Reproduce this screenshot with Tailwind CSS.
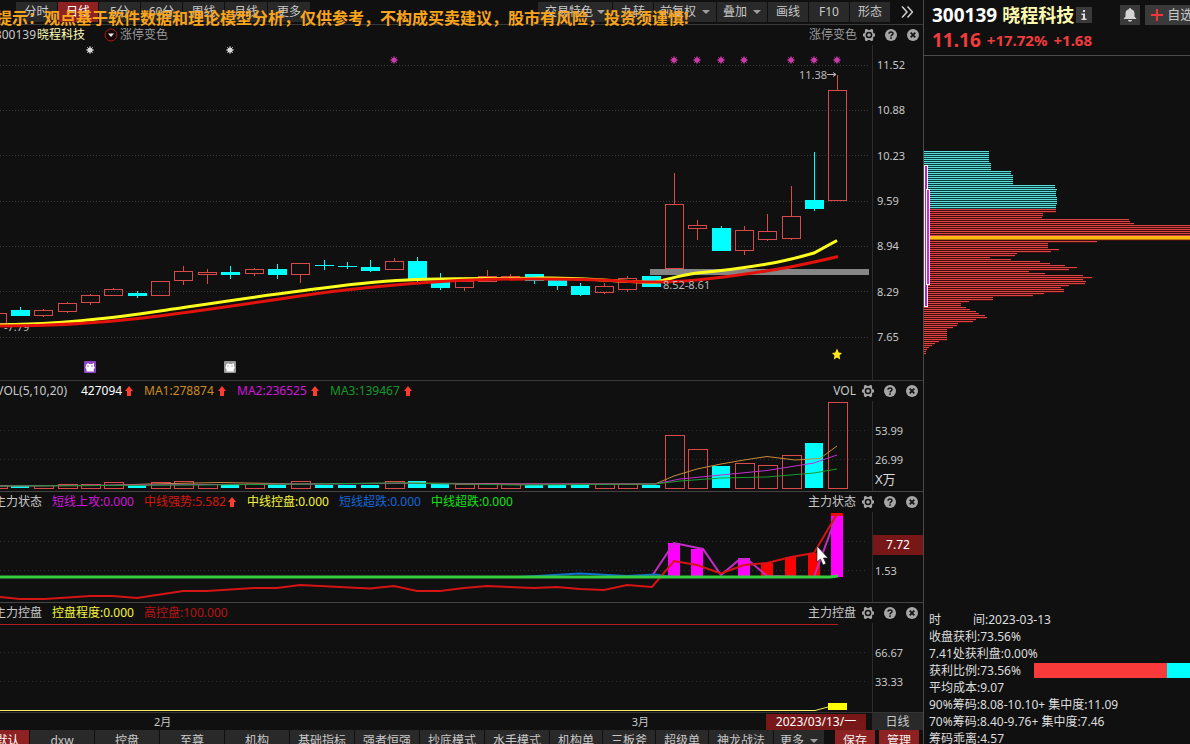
<!DOCTYPE html>
<html lang="zh-CN">
<head>
<meta charset="utf-8">
<title>300139 晓程科技</title>
<script src="https://cdn.jsdelivr.net/npm/@tailwindcss/browser@4"></script>
</head>
<body class="h-screen overflow-hidden bg-[#101010] font-['Noto_Sans','Noto_Sans_CJK_SC',sans-serif] text-xs text-[#c8c8c8]">

<svg class="hidden" aria-hidden="true">
  <symbol id="gear" viewBox="0 0 12 12">
    <path fill="#a6a6a6" fill-rule="evenodd" d="M2.6 0h1.6l.7 1h2.2l.7-1h1.6l.9 2-.4.9.9 1.6H12v3h-1.2l-.9 1.6.4.9-.9 2H7.8l-.7-1H4.900l-.7 1H2.600l-.9-2 .4-.9-.9-1.600H0v-3h1.200l.9-1.600-.4-.9zM6 2.700a3.300 3.300 0 1 0 0 6.600a3.300 3.300 0 0 0 0-6.600z"/>
    <circle cx="6" cy="6" r="1.800" fill="#a6a6a6"/>
  </symbol>
  <symbol id="help" viewBox="0 0 12 12">
    <circle cx="6" cy="6" r="6" fill="#a6a6a6"/>
    <path d="M4 4.800C4 2.300 8 2.300 8 4.600C8 5.900 6 5.900 6 7.500" fill="none" stroke="#151515" stroke-width="1.500"/>
    <rect x="5.200" y="8.300" width="1.600" height="1.600" fill="#151515"/>
  </symbol>
  <symbol id="close" viewBox="0 0 12 12">
    <circle cx="6" cy="6" r="6" fill="#a6a6a6"/>
    <path d="M3.700 3.700L8.300 8.300M8.300 3.700L3.700 8.300" stroke="#151515" stroke-width="1.800"/>
  </symbol>
  <symbol id="up" viewBox="0 0 8 10">
    <path d="M4 0L8 5H6V10H2V5H0z" fill="#ff3b30"/>
  </symbol>
  <symbol id="burst" viewBox="-4 -4 8 8">
    <circle r="2.600" fill="currentColor"/>
    <path d="M-3.800 0H3.800M0-3.800V3.800M-2.700-2.700L2.700 2.700M2.700-2.700L-2.700 2.700" stroke="currentColor" stroke-width="1"/>
  </symbol>
  <symbol id="note" viewBox="0 0 12 12">
    <rect width="12" height="12" rx="1" fill="currentColor"/>
    <path d="M2 4L4 2L5 3H8L10 2V5L11 7L9.500 8L10 10.500H2.500V8L1.500 7z" fill="#fff"/>
    <path d="M3 5H5M7 5H9" stroke="currentColor" stroke-width=".8"/>
  </symbol>
</svg>

<div class="flex h-full">
  <main class="flex min-w-0 flex-1 flex-col">

    <nav class="relative flex h-[25px] shrink-0 border-b border-[#3a3a3a] pt-0.5 pl-4">
      <div class="flex h-5 gap-px">
        <button class="w-[41px] bg-[#292929]">分时</button>
        <button class="w-10 bg-[#8e2222] text-white">日线</button>
        <button class="w-[41px] bg-[#292929]">5分</button>
        <button class="w-[41px] bg-[#292929]">60分</button>
        <button class="w-[41px] bg-[#292929]">周线</button>
        <button class="w-[42px] bg-[#292929]">月线</button>
        <button class="w-[42px] bg-[#292929]">更多</button>
      </div>
      <div class="ml-auto flex h-5 gap-px">
        <button class="flex w-[74px] items-center justify-center gap-1 bg-[#292929]">交易特色<svg class="h-1 w-2" viewBox="0 0 8 4"><path d="M0 0H8L4 4z" fill="#a0a0a0"/></svg></button>
        <button class="w-10 bg-[#292929]">九转</button>
        <button class="flex w-[62px] items-center justify-center gap-1.5 bg-[#292929]">前复权<svg class="h-1 w-2" viewBox="0 0 8 4"><path d="M0 0H8L4 4z" fill="#a0a0a0"/></svg></button>
        <button class="flex w-[50px] items-center justify-center gap-1.5 bg-[#292929]">叠加<svg class="h-1 w-2" viewBox="0 0 8 4"><path d="M0 0H8L4 4z" fill="#a0a0a0"/></svg></button>
        <button class="w-10 bg-[#292929]">画线</button>
        <button class="w-10 bg-[#292929]">F10</button>
        <button class="w-10 bg-[#292929]">形态</button>
        <button class="flex w-8 items-center justify-center" aria-label="展开"><svg class="h-3 w-3" viewBox="0 0 12 12"><path d="M1 0.500L6 6L1 11.500M6.500 0.500L11.500 6L6.500 11.500" fill="none" stroke="#d0d0d0" stroke-width="1.500"/></svg></button>
      </div>
      <p class="absolute top-1.5 -left-5 z-10 text-base leading-6 font-bold whitespace-nowrap text-[#f9a51b]">险提示：观点基于软件数据和理论模型分析，仅供参考，不构成买卖建议，股市有风险，投资须谨慎!</p>
    </nav>

    <section class="flex min-h-0 flex-1 flex-col">
      <header class="-ml-2 flex h-5 shrink-0 items-center pr-1">
        <span class="w-11 text-right">300139</span>
        <span class="ml-px w-[49px] text-[#fffbb8]">晓程科技</span>
        <button class="ml-[18px] h-[14px] w-[14px]" aria-label="选择指标"><svg viewBox="0 0 14 14"><circle cx="7" cy="7" r="6" fill="#180808" stroke="#a81c1c"/><path d="M4 5.500H10L7 9z" fill="#eee"/></svg></button>
        <span class="ml-0.5 text-[#999]">涨停变色</span>
        <span class="ml-auto text-[#999]">涨停变色</span>
        <button class="ml-1.5 h-3 w-3" aria-label="设置"><svg class="h-3 w-3"><use href="#gear"/></svg></button>
        <button class="ml-2.5 h-3 w-3" aria-label="帮助"><svg class="h-3 w-3"><use href="#help"/></svg></button>
        <button class="ml-2.5 h-3 w-3" aria-label="关闭"><svg class="h-3 w-3"><use href="#close"/></svg></button>
      </header>
      <div class="flex min-h-0 flex-1">
        <svg id="price" class="h-full min-w-0 flex-1" viewBox="0 45 872 335" preserveAspectRatio="none">
          <path d="M0 65.500H868M0 110.500H868M0 155.500H868M0 201.500H868M0 246.500H868M0 291.500H868M0 337.500H868" stroke="#3c3c3c" stroke-dasharray="1 2"/>
          <text x="4" y="331" font-size="11" fill="#c0c0c0">-7.79</text>
          <rect x="650" y="269" width="219" height="6" fill="#858585"/>
          <g id="candles"></g>
          <path d="M0 325C60 323.500 100 320 167 310S260 296 300 291S370 281 417 279.500S500 279 540 278S600 281 655 282.500C670 279 680 275 697 273C730 270 750 267 767 264C785 261 800 257 814 253L837 240.500" fill="none" stroke="#ffff1e" stroke-width="3"/>
          <path d="M0 326C60 326 100 323 143 318S260 302 300 296S400 284 450 281S570 279 600 280S650 284 697 280C740 276 760 272 790 267C810 263 820 261 838 256.500" fill="none" stroke="#e3120b" stroke-width="3"/>
          <text x="663" y="289" font-size="11" fill="#b8b8b8">8.52-8.61</text>
          <text x="799" y="79" font-size="11" fill="#b8b8b8">11.38</text>
          <path d="M827 74.500H836M833 72.500L836 74.500L833 76.500" fill="none" stroke="#b8b8b8"/>
          <g color="#d8d8d8"><use href="#burst" x="86" y="46" width="8" height="8"/><use href="#burst" x="226" y="46" width="8" height="8"/></g>
          <g color="#c93aa8">
            <use href="#burst" x="390" y="56" width="8" height="8"/><use href="#burst" x="670" y="56" width="8" height="8"/><use href="#burst" x="693" y="56" width="8" height="8"/><use href="#burst" x="717" y="56" width="8" height="8"/><use href="#burst" x="740" y="56" width="8" height="8"/><use href="#burst" x="787" y="56" width="8" height="8"/><use href="#burst" x="810" y="56" width="8" height="8"/><use href="#burst" x="833" y="56" width="8" height="8"/>
          </g>
          <use href="#note" x="84" y="361" width="12" height="12" color="#8a45c0"/>
          <use href="#note" x="224" y="361" width="12" height="12" color="#999"/>
          <path d="M837 348.500L838.700 352.500L842 353L839.500 355.500L840.200 359.500L837 357.500L833.800 359.500L834.500 355.500L832 353L835.300 352.500z" fill="#ffe81a"/>
        </svg>
        <div class="flex w-[51px] shrink-0 flex-col justify-between border-l border-[#2c2c2c] pt-3 pb-[35px] pl-1 text-[11px] leading-4">
          <span>11.52</span><span>10.88</span><span>10.23</span><span>9.59</span><span>8.94</span><span>8.29</span><span>7.65</span>
        </div>
      </div>
    </section>

    <section class="flex h-[111px] shrink-0 flex-col border-t border-[#3a3a3a]">
      <header class="-ml-[6px] flex h-5 shrink-0 items-center pr-[5px] whitespace-nowrap">
        <span class="w-[73px] text-right">VOL(5,10,20)</span>
        <span class="ml-3.5 w-[42px] text-white">427094</span><svg class="ml-0.5 h-2.5 w-2"><use href="#up"/></svg>
        <span class="ml-[11px] w-[72px] text-[#cf8c1f]">MA1:278874</span><svg class="ml-0.5 h-2.5 w-2"><use href="#up"/></svg>
        <span class="ml-[11px] w-[72px] text-[#d117dc]">MA2:236525</span><svg class="ml-0.5 h-2.5 w-2"><use href="#up"/></svg>
        <span class="ml-[11px] w-[72px] text-[#13982b]">MA3:139467</span><svg class="ml-0.5 h-2.5 w-2"><use href="#up"/></svg>
        <span class="ml-auto">VOL</span>
        <button class="ml-1.5 h-3 w-3" aria-label="设置"><svg class="h-3 w-3"><use href="#gear"/></svg></button>
        <button class="ml-2.5 h-3 w-3" aria-label="帮助"><svg class="h-3 w-3"><use href="#help"/></svg></button>
        <button class="ml-2.5 h-3 w-3" aria-label="关闭"><svg class="h-3 w-3"><use href="#close"/></svg></button>
      </header>
      <div class="flex min-h-0 flex-1">
        <svg class="h-full min-w-0 flex-1" viewBox="0 401 872 90" preserveAspectRatio="none">
          <path d="M0 430.500H868M0 459.500H868" stroke="#303030" stroke-dasharray="1 3"/>
          <g id="volumes"></g>
          <g fill="none">
            <path d="M0 486L100 485.500L150 484L220 482.500L300 484L410 483L520 484L655 484L674 476L697 469L721 464L744 460L767 456.500L795 460L820 458.500L837 446" stroke="#c98a3a"/>
            <path d="M0 486L130 485L300 484L400 483.500L520 484L655 484L680 479L721 475L767 470.500L814 463L837 455" stroke="#c02fd0"/>
            <path d="M0 486L200 485L400 483L520 485L655 484L680 481L721 478L767 477L814 473L837 469" stroke="#1c9a30"/>
          </g>
        </svg>
        <div class="flex w-[51px] shrink-0 flex-col border-l border-[#2c2c2c] pt-[22px] pl-0.5 text-[11px] leading-4">
          <span>53.99</span><span class="mt-[13px]">26.99</span><span class="mt-[3px] text-[13px] text-[#ddd]">X万</span>
        </div>
      </div>
    </section>

    <section class="flex h-[111px] shrink-0 flex-col border-t border-[#444]">
      <header class="-ml-[6px] flex h-5 shrink-0 items-center pr-[5px] whitespace-nowrap">
        <span class="w-12">主力状态</span>
        <span class="ml-2.5 w-[82px] text-[#d117dc]">短线上攻:0.000</span>
        <span class="ml-2.5 w-[82px] text-[#d8150f]">中线强势:5.582</span><svg class="ml-0.5 h-2.5 w-2"><use href="#up"/></svg>
        <span class="ml-[11px] w-[82px] text-[#f4f43a]">中线控盘:0.000</span>
        <span class="ml-2.5 w-[82px] text-[#1566d8]">短线超跌:0.000</span>
        <span class="ml-2.5 w-[82px] text-[#16e016]">中线超跌:0.000</span>
        <span class="ml-auto">主力状态</span>
        <button class="ml-1.5 h-3 w-3" aria-label="设置"><svg class="h-3 w-3"><use href="#gear"/></svg></button>
        <button class="ml-2.5 h-3 w-3" aria-label="帮助"><svg class="h-3 w-3"><use href="#help"/></svg></button>
        <button class="ml-2.5 h-3 w-3" aria-label="关闭"><svg class="h-3 w-3"><use href="#close"/></svg></button>
      </header>
      <div class="flex min-h-0 flex-1">
        <svg class="h-full min-w-0 flex-1" viewBox="0 512 872 90" preserveAspectRatio="none">
          <path d="M0 541.500H868M0 570.500H868" stroke="#303030" stroke-dasharray="1 3"/>
          <path d="M668 543h12v34h-12zM691 549h12v28h-12zM738 558h12v19h-12zM831 513h12v64h-12z" fill="#f0f"/>
          <path d="M761 563h12v14h-12zM785 557h11v20h-11zM808 553h12v24h-12zM831 513h12v3h-12z" fill="#f00"/>
          <g fill="none" stroke-width="2">
            <path d="M652 576L674 543L703 549L721 575L740 559H747L767 576L814 577L837 514" stroke="#c42cc8"/>
            <path d="M520 577L580 573.500L627 576L655 574.500L672 577" stroke="#1070d0"/>
            <path d="M0 597L20 599H45L90 596H113L137 598L183 591H207L254 588H277L300 585L370 588.500L394 586L417 591L440 591L464 588L487 586L534 588L557 587L580 589L604 590L627 585L652 587L674 561L697 565L721 573.500L744 565L767 563L791 557L814 553L837 514" stroke="#d61414"/>
          </g>
          <path d="M0 577H830L838 576" fill="none" stroke="#35cf3f" stroke-width="3"/>
          <path d="M817 546V562L820.500 559L823 565L826 563.500L823.500 558H828z" fill="#fff" stroke="#222" stroke-width=".7"/>
        </svg>
        <div class="flex w-[51px] shrink-0 flex-col border-l border-[#2c2c2c] pt-[23px] text-[11px] leading-4">
          <span class="bg-[#771717] text-center text-xs leading-5 text-white">7.72</span><span class="mt-2 pl-0.5">1.53</span>
        </div>
      </div>
    </section>

    <section class="flex h-[110px] shrink-0 flex-col border-t border-[#444]">
      <header class="-ml-[6px] flex h-5 shrink-0 items-center pr-[5px] whitespace-nowrap">
        <span class="w-12">主力控盘</span>
        <span class="ml-2.5 w-[82px] text-[#f4f43a]">控盘程度:0.000</span>
        <span class="ml-2.5 text-[#b81414]">高控盘:100.000</span>
        <span class="ml-auto">主力控盘</span>
        <button class="ml-1.5 h-3 w-3" aria-label="设置"><svg class="h-3 w-3"><use href="#gear"/></svg></button>
        <button class="ml-2.5 h-3 w-3" aria-label="帮助"><svg class="h-3 w-3"><use href="#help"/></svg></button>
        <button class="ml-2.5 h-3 w-3" aria-label="关闭"><svg class="h-3 w-3"><use href="#close"/></svg></button>
      </header>
      <div class="flex min-h-0 flex-1">
        <svg class="h-full min-w-0 flex-1" viewBox="0 623 872 89" preserveAspectRatio="none">
          <path d="M0 652.500H868M0 681.500H868" stroke="#303030" stroke-dasharray="1 3"/>
          <path d="M0 624.500H838" stroke="#b81c22"/>
          <path d="M0 710.500H815L828 707" fill="none" stroke="#f4f060"/>
          <rect x="828" y="703" width="19" height="7" fill="#ff0"/>
        </svg>
        <div class="flex w-[51px] shrink-0 flex-col border-l border-[#2c2c2c] pt-[22px] pl-0.5 text-[11px] leading-4">
          <span>66.67</span><span class="mt-[13px]">33.33</span>
        </div>
      </div>
    </section>

    <div class="flex h-[18px] shrink-0 items-center border-t border-[#333] leading-4">
      <span class="w-[766px] min-w-0 shrink pl-[154px] text-[11px]"><span class="flex justify-between pr-[117px]"><span>2月</span><span>3月</span></span></span>
      <span class="ml-auto w-[100px] shrink-0 bg-[#771717] text-center text-white">2023/03/13/一</span>
      <button class="ml-1.5 h-full w-[51px] shrink-0 bg-[#292929]">日线</button>
    </div>

    <nav class="flex h-[14px] shrink-0 gap-px overflow-hidden pr-1 leading-5 whitespace-nowrap">
      <button class="-ml-3.5 h-[21px] w-[43px] bg-[#8e2222] text-white">默认</button>
      <button class="h-[21px] w-16 bg-[#292929]">dxw</button>
      <button class="h-[21px] w-16 bg-[#292929]">控盘</button>
      <button class="h-[21px] w-16 bg-[#292929]">至尊</button>
      <button class="h-[21px] w-16 bg-[#292929]">机构</button>
      <button class="h-[21px] w-16 bg-[#292929]">基础指标</button>
      <button class="h-[21px] w-16 bg-[#292929]">强者恒强</button>
      <button class="h-[21px] w-16 bg-[#292929]">抄底模式</button>
      <button class="h-[21px] w-16 bg-[#292929]">水手模式</button>
      <button class="h-[21px] w-[52px] bg-[#292929]">机构单</button>
      <button class="h-[21px] w-[52px] bg-[#292929]">三板斧</button>
      <button class="h-[21px] w-[52px] bg-[#292929]">超级单</button>
      <button class="h-[21px] w-16 bg-[#292929]">神龙战法</button>
      <button class="flex h-[21px] w-[50px] items-center justify-center gap-1.5 bg-[#292929]">更多<svg class="h-1 w-2" viewBox="0 0 8 4"><path d="M0 0H8L4 4z" fill="#a0a0a0"/></svg></button>
      <button class="ml-auto h-[21px] w-10 bg-[#8e2222] text-[#eee]">保存</button>
      <button class="ml-[3px] h-[21px] w-10 bg-[#8e2222] text-[#eee]">管理</button>
    </nav>
  </main>

  <aside class="flex w-[267px] shrink-0 flex-col overflow-hidden border-l border-[#4a4a4a]">
    <header class="h-14 shrink-0 border-b border-[#4a4a4a] pl-2 font-bold">
      <div class="flex h-[30px] items-center whitespace-nowrap">
        <h1 class="flex items-center text-lg leading-6 text-[#fffbb0]"><span class="mr-[5px] text-[19px] text-white">300139</span>晓程科技</h1>
        <button class="ml-0.5 flex h-4 w-4 shrink-0 items-center justify-center bg-[#3a3a3a]" aria-label="信息"><svg class="h-2.5 w-2" viewBox="0 0 8 10"><path d="M3 0H5V2H3zM1.500 3.500H5V8.500H6.500V10H1.500V8.500H3V5H1.500z" fill="#ddd"/></svg></button>
        <button class="ml-7 flex h-5 w-5 shrink-0 items-center justify-center bg-[#3a3a3a]" aria-label="提醒"><svg class="h-[14px] w-[14px]" viewBox="0 0 14 14"><path d="M6.200 0H7.800V1C10.500 1.500 11.500 3.500 11.500 5.500V8.500L13.500 11H.5L2.500 8.500V5.500C2.500 3.500 3.500 1.500 6.200 1zM5 12H9C8.700 14.300 5.300 14.300 5 12z" fill="#d4d4d4"/></svg></button>
        <button class="ml-[5px] flex h-5 shrink-0 items-center gap-1 bg-[#3a3a3a] px-1.5 text-[13px] font-normal"><svg class="h-3 w-3" viewBox="0 0 12 12"><path d="M6 0V12M0 6H12" stroke="#f03838" stroke-width="2"/></svg>自选</button>
      </div>
      <p class="flex items-center gap-1.5 leading-5 text-[#f23c3c]"><span class="text-[19px]">11.16</span><span class="text-[15px]">+17.72%</span><span class="text-[15px]">+1.68</span></p>
    </header>
    <svg class="min-h-0 w-full flex-1" viewBox="924 56 266 555" preserveAspectRatio="none">
      <g id="chips"></g>
      <rect x="924" y="236" width="266" height="3" fill="#fdb813"/><path d="M924 239.500H1190" stroke="#b87808"/>
      <rect x="924.500" y="165.500" width="3" height="141" fill="#b51fc4" stroke="#fff"/>
      <rect x="926.500" y="189.500" width="3" height="95" fill="#e01fe6" stroke="#fff"/>
    </svg>
    <div class="h-[133px] shrink-0 overflow-hidden pl-[5px] leading-[17px] whitespace-nowrap text-[#dedede]">
      <p class="flex gap-8"><span>时</span><span>间:2023-03-13</span></p>
      <p>收盘获利:73.56%</p>
      <p>7.41处获利盘:0.00%</p>
      <div class="flex items-center"><span class="w-[105px] shrink-0">获利比例:73.56%</span><span class="h-[15px] w-[133px] bg-[#f83a3a]"></span><span class="h-[15px] flex-1 bg-[#0ff]"></span></div>
      <p>平均成本:9.07</p>
      <p>90%筹码:8.08-10.10+ 集中度:11.09</p>
      <p>70%筹码:8.40-9.76+ 集中度:7.46</p>
      <p>筹码乖离:4.57</p>
    </div>
  </aside>
</div>

<script>
const RED = '#d84a4a', CYAN = '#00ffff';
// [centre x, rising, body top, body bottom, wick top, wick bottom, volume top]
const days = [
  [-3,1,313,323,313,323,485],[20,0,310,316,307,316,486],[43,1,310,315,309,317,485],[67,1,303,311,302,313,484],
  [90,1,295,302,294,305,484],[113,1,289,295,288,295,482],[137,0,293,296,291,298,485],[160,1,281,295,281,295,482],
  [183,1,271,280,266,285,481],[207,1,272,274,269,284,484],[230,0,272,275,266,279,485],[254,1,269,273,268,276,484],
  [277,0,269,275,264,279,485],[300,1,263,274,263,283,481],[324,0,265,266,260,270,485],[347,0,266,267,262,269,485],
  [370,0,267,271,260,272,485],[394,1,261,269,258,269,481],[417,0,261,280,257,282,481],[440,0,282,288,273,290,484],
  [464,1,281,287,281,291,484],[487,1,276,281,270,281,483],[510,1,276,279,274,279,484],[534,0,274,281,274,284,485],
  [557,0,280,286,280,290,485],[580,0,286,295,283,296,485],[604,1,286,292,283,294,484],[627,1,278,289,276,292,484],
  [651,0,276,287,276,287,485],[674,1,204,268,173,268,435],[697,1,225,228,220,240,449],[721,0,228,251,226,251,466],
  [744,1,230,250,226,255,463],[767,1,231,239,214,241,465],[791,1,216,238,186,240,455],[814,0,200,209,152,211,443],
  [837,1,90,200,75,200,402]
];
let candles = '', volumes = '';
for (const [x, up, top, bottom, high, low, vol] of days) {
  const line = (a, b) => b > a ? `<path d="M${x + .5} ${a}V${b}" stroke="${up ? RED : CYAN}"/>` : '';
  candles += line(high, top) + line(bottom, low);
  candles += up
    ? `<rect x="${x - 8.5}" y="${top + .5}" width="18" height="${bottom - top}" fill="none" stroke="${RED}"/>`
    : `<rect x="${x - 9}" y="${top}" width="19" height="${bottom - top}" fill="${CYAN}"/>`;
  volumes += up
    ? `<rect x="${x - 8.5}" y="${vol + .5}" width="19" height="${488 - vol}" fill="none" stroke="${RED}"/>`
    : `<rect x="${x - 9}" y="${vol}" width="18" height="${488 - vol}" fill="${CYAN}"/>`;
}
document.getElementById('candles').innerHTML = candles;
document.getElementById('volumes').innerHTML = volumes;

// Chip distribution: [right end, number of price levels], from the highest price down
const levels = [
  [989,6],[991,4],[1011,2],[1013,5],[1055,2],[1057,1],[1056,3],[1057,4],[1056,4],[1043,2],[1042,1],[1129,1],[1130,1],[1134,1],
  [1190,8],[1097,1],[1048,3],[1059,1],[1051,1],[1017,1],[1015,1],[990,1],[1011,1],[1040,1],[1050,1],[1065,1],[1077,1],[1069,1],
  [1029,1],[1045,1],[1083,1],[1092,1],[1083,1],[1086,1],[1085,1],[1069,1],[1061,1],[1064,2],[1044,1],[1033,1],[993,2],[969,1],
  [961,2],[966,1],[970,1],[976,1],[979,1],[985,1],[987,1],[976,1],[973,1],[958,1],[957,1],[953,1],[947,6],[939,1],[935,1],
  [932,1],[929,1],[927,1],[926,2]
];
let chips = '', row = 0;
for (const [end, count] of levels)
  for (let i = 0; i < count; i++, row++) {
    const y = 151 + row * 2, trapped = row < 29;
    chips += `<rect x="924" y="${y}" width="${end - 924}" height="2" fill="${trapped ? '#0c3a3a' : '#3c0d0d'}"/>`
      + `<rect x="924" y="${y}" width="${end - 924}" height="1" fill="${trapped ? '#5cdcd8' : '#dc4444'}"/>`;
  }
document.getElementById('chips').innerHTML = chips;
</script>
</body>
</html>
